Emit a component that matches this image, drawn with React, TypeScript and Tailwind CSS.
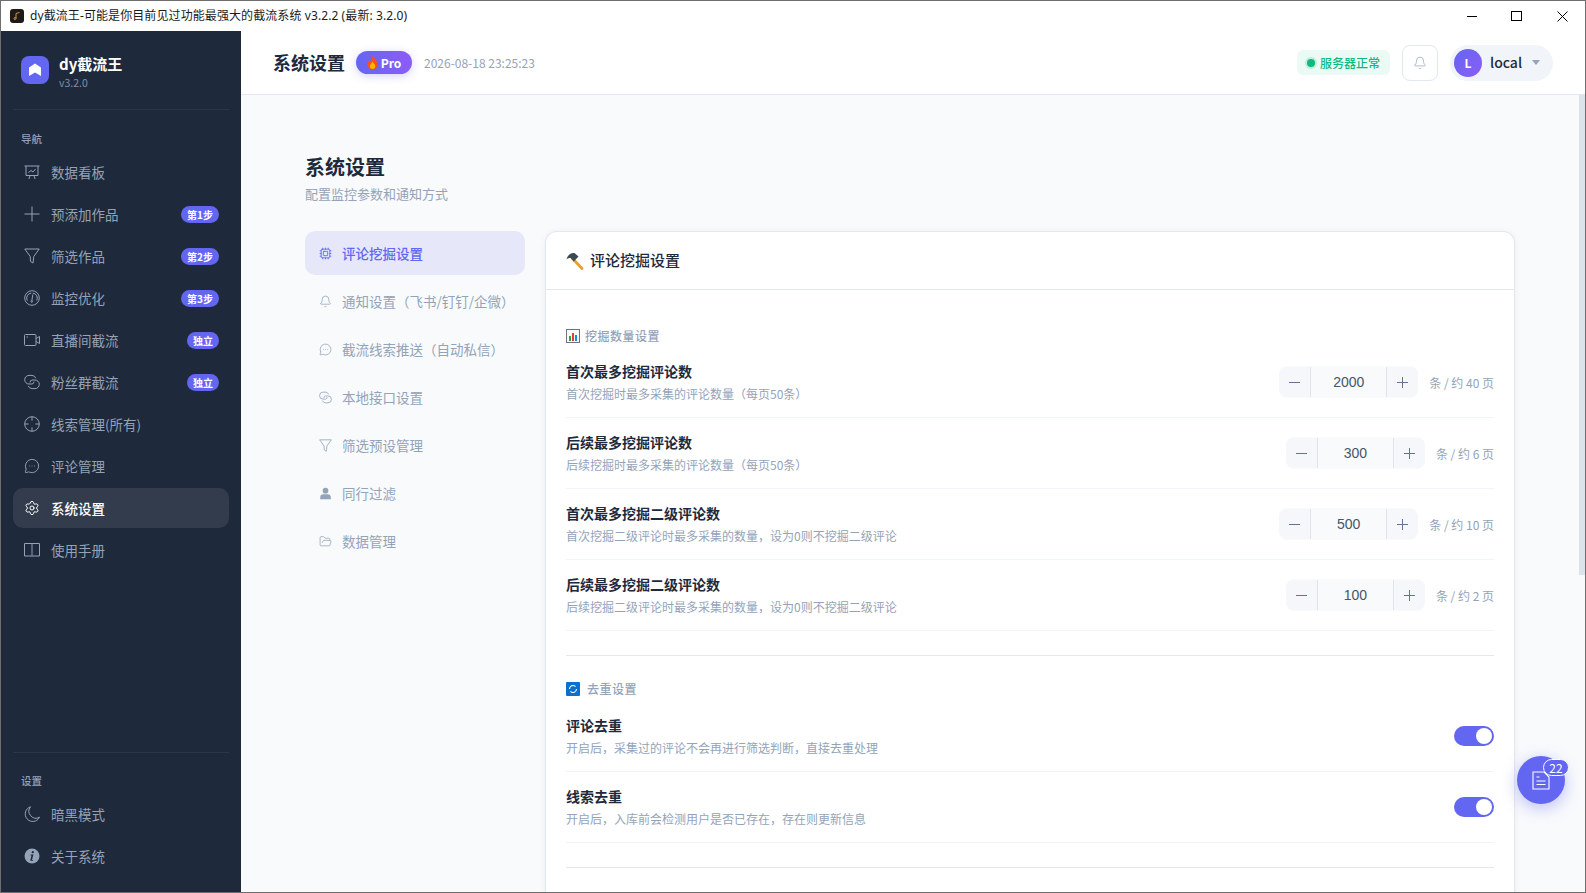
import {
  Bell,
  Cpu,
  FolderOpen,
  MessageCircleMore,
  Settings,
} from "lucide-react";

type IconProps = { size?: number; className?: string };

function Outline({ size = 16, className = "", children }: IconProps & { children: React.ReactNode }) {
  return (
    <svg width={size} height={size} viewBox="0 0 16 16" fill="none" stroke="currentColor" strokeWidth="1" className={className}>
      {children}
    </svg>
  );
}

const BoardIcon = (p: IconProps) => (
  <Outline {...p}>
    <path d="M.5 2h15M2 2v9.500h12V2M5 15l1-3.500M11 15l-1-3.500M4.500 8.500 7 6.500l2 1.500 2.500-3" />
  </Outline>
);
const PlusIcon = (p: IconProps) => (
  <Outline {...p}>
    <path d="M8 .5v15M.5 8h15" />
  </Outline>
);
const FilterIcon = (p: IconProps) => (
  <Outline {...p}>
    <path d="M.8 1h14.400L9.800 8.500 9 15l-2.500-1.500-.3-5Z" />
  </Outline>
);
const GaugeIcon = (p: IconProps) => (
  <Outline {...p}>
    <circle cx="8" cy="8" r="7.300" />
    <path d="M3.300 10.500a5 5 0 0 1 4-7.400M12.700 10.500a5 5 0 0 0-4-7.400M8.800 4.500 7.800 11" />
    <circle cx="7.700" cy="11.500" r=".8" />
  </Outline>
);
const VideoIcon = (p: IconProps) => (
  <Outline {...p}>
    <rect x=".5" y="2.500" width="11.500" height="11" rx="1" />
    <path d="M12 6.500l3.500-2v7l-3.500-2M2.500 5h1.500" />
  </Outline>
);
const LoopsIcon = (p: IconProps) => (
  <Outline {...p}>
    <path d="M6 10H5a4.300 4.300 0 0 1 0-8.600h3a4.300 4.300 0 0 1 3.800 2.800" />
    <path d="M10 6h1a4.300 4.300 0 0 1 0 8.600H8a4.300 4.300 0 0 1-3.800-2.800" />
    <path d="M6 10h2a2.500 2.500 0 0 0 2-2.500M10 6H8A2.500 2.500 0 0 0 6 8.500" />
  </Outline>
);
const AimIcon = (p: IconProps) => (
  <Outline {...p}>
    <circle cx="8" cy="8" r="7.300" />
    <path d="M8 .7v4M8 11.300v4M.7 8h4M11.300 8h4" />
  </Outline>
);
const BookIcon = (p: IconProps) => (
  <Outline {...p}>
    <path d="M1 1.500h14.500v12.500H8.500L8 14.500 7.500 14H.5V1.500ZM8 2v12" />
  </Outline>
);
const MoonIcon = (p: IconProps) => (
  <Outline {...p}>
    <path d="M6.500.8A7.500 7.500 0 1 0 15.500 11.200 7 7 0 0 1 6.500.8Z" />
  </Outline>
);
const UserFilledIcon = ({ size = 16, className = "" }: IconProps) => (
  <svg width={size} height={size} viewBox="0 0 16 16" fill="currentColor" className={className}>
    <circle cx="8" cy="4.500" r="3.500" />
    <path d="M1.500 15v-2a4 4 0 0 1 4-4h5a4 4 0 0 1 4 4v2Z" />
  </svg>
);

const SettingsIcon = ({ size = 16, className = "" }: IconProps) => <Settings size={size} strokeWidth={1.5} className={className} />;
const ChatIcon = ({ size = 16, className = "" }: IconProps) => <MessageCircleMore size={size} strokeWidth={1.4} className={className} />;
const BellIcon = ({ size = 16, className = "" }: IconProps) => <Bell size={size} strokeWidth={1.4} className={className} />;
const CpuIcon = ({ size = 16, className = "" }: IconProps) => <Cpu size={size} strokeWidth={1.6} className={className} />;
const FolderIcon = ({ size = 16, className = "" }: IconProps) => <FolderOpen size={size} strokeWidth={1.4} className={className} />;

type NavItem = { label: string; icon: (p: IconProps) => React.ReactNode; badge?: string; active?: boolean };

const navItems: NavItem[] = [
  { label: "数据看板", icon: BoardIcon },
  { label: "预添加作品", icon: PlusIcon, badge: "第1步" },
  { label: "筛选作品", icon: FilterIcon, badge: "第2步" },
  { label: "监控优化", icon: GaugeIcon, badge: "第3步" },
  { label: "直播间截流", icon: VideoIcon, badge: "独立" },
  { label: "粉丝群截流", icon: LoopsIcon, badge: "独立" },
  { label: "线索管理(所有)", icon: AimIcon },
  { label: "评论管理", icon: ChatIcon },
  { label: "系统设置", icon: SettingsIcon, active: true },
  { label: "使用手册", icon: BookIcon },
];

const settingMenu: { label: string; icon: (p: IconProps) => React.ReactNode; active?: boolean }[] = [
  { label: "评论挖掘设置", icon: CpuIcon, active: true },
  { label: "通知设置（飞书/钉钉/企微）", icon: BellIcon },
  { label: "截流线索推送（自动私信）", icon: ChatIcon },
  { label: "本地接口设置", icon: LoopsIcon },
  { label: "筛选预设管理", icon: FilterIcon },
  { label: "同行过滤", icon: UserFilledIcon },
  { label: "数据管理", icon: FolderIcon },
];

const numberRows = [
  { title: "首次最多挖掘评论数", desc: "首次挖掘时最多采集的评论数量（每页50条）", value: "2000", unit: "条 / 约 40 页" },
  { title: "后续最多挖掘评论数", desc: "后续挖掘时最多采集的评论数量（每页50条）", value: "300", unit: "条 / 约 6 页" },
  { title: "首次最多挖掘二级评论数", desc: "首次挖掘二级评论时最多采集的数量，设为0则不挖掘二级评论", value: "500", unit: "条 / 约 10 页" },
  { title: "后续最多挖掘二级评论数", desc: "后续挖掘二级评论时最多采集的数量，设为0则不挖掘二级评论", value: "100", unit: "条 / 约 2 页" },
];

const toggleRows = [
  { title: "评论去重", desc: "开启后，采集过的评论不会再进行筛选判断，直接去重处理" },
  { title: "线索去重", desc: "开启后，入库前会检测用户是否已存在，存在则更新信息" },
];

function SideLink({ item }: { item: NavItem }) {
  const Icon = item.icon;
  return (
    <div
      className={`flex h-[40px] items-center rounded-[10px] pl-[11px] pr-[10px] ${
        item.active ? "bg-[#333c4d] font-medium text-white" : "text-[#94a3b8]"
      }`}
    >
      <Icon size={16} className="shrink-0" />
      <span className="ml-[11px] flex-1 text-[13.5px]">{item.label}</span>
      {item.badge && (
        <span className="flex h-[17px] items-center rounded-full bg-[#6366f1] px-[6px] text-[10px] font-bold text-white">
          {item.badge}
        </span>
      )}
    </div>
  );
}

function Sidebar() {
  return (
    <aside className="flex w-[240px] shrink-0 flex-col bg-[#1e293b] px-[12px]">
      <div className="flex h-[79px] items-center border-b border-[#2b3648] pl-[8px]">
        <div className="flex h-[28px] w-[28px] items-center justify-center rounded-[8px] bg-[#6366f1]">
          <svg width="16" height="16" viewBox="0 0 16 16" fill="#ffffff">
            <path d="M8 1.5 14 5.5V14L8 10.5 2 14V5.5Z" />
          </svg>
        </div>
        <div className="ml-[10px] pt-[5px]">
          <div className="text-[15px] font-bold leading-[20px] text-white">dy截流王</div>
          <div className="mt-[1px] text-[10.5px] leading-[16px] text-[#8290a5]">v3.2.0</div>
        </div>
      </div>
      <div className="mt-[20px] h-[18px] pl-[8px] text-[10.5px] font-medium leading-[18px] text-[#94a3b8]">导航</div>
      <nav className="mt-[4px] flex flex-col gap-[2px]">
        {navItems.map((item) => (
          <SideLink key={item.label} item={item} />
        ))}
      </nav>
      <div className="mt-auto border-t border-[#2b3648] pb-[16px] pt-[19px]">
        <div className="h-[18px] pl-[8px] text-[10.5px] font-medium leading-[18px] text-[#94a3b8]">设置</div>
        <div className="mt-[4px] flex flex-col gap-[2px]">
          <SideLink item={{ label: "暗黑模式", icon: MoonIcon }} />
          <div className="flex h-[40px] items-center pl-[11px] text-[#94a3b8]">
            <svg width="16" height="16" viewBox="0 0 16 16">
              <circle cx="8" cy="8" r="7.500" fill="#94a3b8" />
              <circle cx="8.800" cy="4.200" r="1.100" fill="#1e293b" />
              <path d="M6.600 6.600h2.800L8 12h1v.8H6.200L7.500 7.400h-.9Z" fill="#1e293b" />
            </svg>
            <span className="ml-[11px] text-[13.5px]">关于系统</span>
          </div>
        </div>
      </div>
    </aside>
  );
}

function Header() {
  return (
    <header className="flex h-[64px] shrink-0 items-center border-b border-[#e2e8f0] bg-white pl-[32px] pr-[32px]">
      <h1 className="text-[18px] font-bold text-[#1e293b]">系统设置</h1>
      <span className="ml-[11px] flex h-[23px] w-[56px] items-center justify-center gap-[3px] rounded-full bg-gradient-to-r from-[#6366f1] to-[#8b5cf6] text-[12px] font-bold text-white shadow-[0_2px_8px_rgba(99,102,241,0.3)]">
        <svg width="11" height="15" viewBox="0 0 12 16">
          <path d="M6 0c.6 2.600 5.600 5 5.600 10A5.600 5.600 0 0 1 .4 10C.4 7.600 2 6.400 2.600 4.600c.7.600 1 1.300 1.200 2C5 5 6.200 3 6 0Z" fill="#f4511e" />
          <path d="M6 7c.3 1.400 3 2.600 3 5a3 3 0 0 1-6 0c0-2 2.400-2.800 3-5Z" fill="#ffb300" />
        </svg>
        Pro
      </span>
      <span className="ml-[12px] text-[12px] text-[#94a3b8]">2026-08-18 23:25:23</span>
      <div className="ml-auto flex items-center">
        <div className="flex h-[25px] w-[93px] items-center justify-center gap-[5px] rounded-[6px] bg-[#ecfaf5] text-[12px] font-medium text-[#10b981]">
          <span className="h-[8px] w-[8px] rounded-full bg-[#10b981] shadow-[0_0_0_2px_rgba(16,185,129,0.2)]" />
          服务器正常
        </div>
        <button className="ml-[12px] flex h-[36px] w-[36px] items-center justify-center rounded-[8px] border border-[#e2e8f0] bg-white text-[#94a3b8]">
          <Bell size={14} strokeWidth={1.25} />
        </button>
        <div className="ml-[12px] flex h-[36px] w-[103px] items-center rounded-full bg-[#f1f5f9] pl-[4px]">
          <div className="flex h-[28px] w-[28px] items-center justify-center rounded-full bg-gradient-to-br from-[#6366f1] to-[#8b5cf6] text-[12px] font-semibold text-white">
            L
          </div>
          <span className="ml-[8px] text-[14px] font-medium text-[#1e293b]">local</span>
          <svg width="8" height="5" viewBox="0 0 8 5" className="ml-[10px]">
            <path d="M0 0h8L4 5Z" fill="#94a3b8" />
          </svg>
        </div>
      </div>
    </header>
  );
}

function Stepper({ value }: { value: string }) {
  return (
    <div className="flex h-[32px] w-[139px] items-center rounded-[8px] bg-[#f8fafc] font-['Liberation_Sans',sans-serif] text-[#475569]">
      <span className="flex h-[30px] w-[32px] items-center justify-center rounded-l-[8px] border-r border-[#dfe3ea] bg-[#f5f7fa] text-[#64748b]">
        <PlusMinus />
      </span>
      <span className="flex-1 text-center text-[14px]">{value}</span>
      <span className="flex h-[30px] w-[32px] items-center justify-center rounded-r-[8px] border-l border-[#dfe3ea] bg-[#f5f7fa] text-[#64748b]">
        <PlusMinus plus />
      </span>
    </div>
  );
}

function PlusMinus({ plus = false }: { plus?: boolean }) {
  return (
    <svg width="11" height="11" viewBox="0 0 11 11" stroke="currentColor" strokeWidth="1">
      <path d="M0 5.500h11" />
      {plus && <path d="M5.500 0v11" />}
    </svg>
  );
}

function SettingRow({ title, desc, children }: { title: string; desc: string; children: React.ReactNode }) {
  return (
    <div className="flex h-[71px] items-center justify-between border-b border-[#f1f5f9]">
      <div>
        <div className="text-[14px] font-semibold leading-[20px] text-[#1e293b]">{title}</div>
        <div className="mt-[4px] text-[12px] leading-[18px] text-[#94a3b8]">{desc}</div>
      </div>
      {children}
    </div>
  );
}

function Toggle() {
  return (
    <div className="flex h-[20px] w-[40px] items-center justify-end rounded-full bg-[#6366f1] pr-[2px]">
      <span className="h-[16px] w-[16px] rounded-full bg-white" />
    </div>
  );
}

function SectionTitle({ icon, text }: { icon: React.ReactNode; text: string }) {
  return (
    <div className="flex h-[20px] items-center gap-[5px] text-[12px] font-medium tracking-[0.5px] text-[#94a3b8]">
      {icon}
      {text}
    </div>
  );
}

function SettingsCard() {
  return (
    <section className="h-[800px] flex-1 rounded-t-[12px] border border-b-0 border-[#e2e8f0] bg-white shadow-[0_1px_6px_rgba(15,23,42,0.06)]">
      <div className="flex h-[58px] items-center gap-[6px] border-b border-[#e2e8f0] pl-[20px] text-[15px] font-medium text-[#1e293b]">
        <svg width="18" height="18" viewBox="0 0 18 18">
          <path d="M6.500 6.500 16 16.500" stroke="#e8a02a" strokeWidth="2.800" strokeLinecap="round" />
          <path d="M.5 7.500C1.500 2.800 5.500 .2 8.800 1.200L12.500 4.500 7.800 9.500 4.800 6.200C3.300 5.700 1.800 6.200.5 7.500Z" fill="#3d4a54" />
        </svg>
        评论挖掘设置
      </div>
      <div className="px-[20px] pt-[36px]">
        <SectionTitle
          text="挖掘数量设置"
          icon={
            <svg width="14" height="14" viewBox="0 0 14 14">
              <rect x="0.500" y="0.500" width="13" height="13" fill="#fafafa" stroke="#6b7280" />
              <rect x="3" y="7" width="2" height="5" fill="#2e9e4f" />
              <rect x="6" y="4" width="2" height="8" fill="#e53935" />
              <rect x="9" y="6" width="2" height="6" fill="#1e88e5" />
            </svg>
          }
        />
        <div className="mt-[1px]">
          {numberRows.map((row) => (
            <SettingRow key={row.title} title={row.title} desc={row.desc}>
              <div className="flex items-center">
                <Stepper value={row.value} />
                <span className="ml-[11px] mt-[1px] text-[12px] text-[#94a3b8]">{row.unit}</span>
              </div>
            </SettingRow>
          ))}
        </div>
        <div className="mt-[24px] border-t border-[#e2e8f0] pt-[23px]">
          <SectionTitle
            text="去重设置"
            icon={
              <svg width="14" height="14" viewBox="0 0 14 14" className="mr-[2px]">
                <rect width="14" height="14" rx="1" fill="#0b6fd0" />
                <path d="M3.500 7a3.500 3.500 0 0 1 6-2.400M10.500 7a3.500 3.500 0 0 1-6 2.400" fill="none" stroke="#fff" strokeWidth="1.100" />
              </svg>
            }
          />
          <div className="mt-[2px]">
            {toggleRows.map((row) => (
              <SettingRow key={row.title} title={row.title} desc={row.desc}>
                <Toggle />
              </SettingRow>
            ))}
          </div>
        </div>
        <div className="mt-[24px] border-t border-[#e2e8f0]" />
      </div>
    </section>
  );
}

export default function App() {
  return (
    <div className="relative flex h-[893px] w-[1586px] flex-col overflow-hidden border border-[#6e6e6e] bg-white font-['Noto_Sans_CJK_SC',sans-serif]">
      {/* 标题栏 */}
      <div className="flex h-[30px] shrink-0 items-center bg-white pl-[9px] pr-[17px] text-[12px] text-[#1a1a1a]">
        <span className="flex h-[14px] w-[14px] items-center justify-center rounded-[3px] bg-[#1f1a17]">
          <svg width="10" height="10" viewBox="0 0 10 10" fill="none" stroke="#c9973f" strokeWidth="1">
            <path d="M4 7.500V2.500L7.500 1.500" />
            <circle cx="3" cy="7.500" r="1" />
          </svg>
        </span>
        <span className="ml-[6px] font-['Noto_Sans','Noto_Sans_CJK_SC',sans-serif] tracking-[0.09px]">dy截流王-可能是你目前见过功能最强大的截流系统 v3.2.2 (最新: 3.2.0)</span>
        <div className="ml-auto flex items-center">
          <span className="h-px w-[10px] bg-black" />
          <span className="ml-[34px] h-[10px] w-[11px] border border-black" />
          <svg width="11" height="11" viewBox="0 0 11 11" stroke="#000" strokeWidth="1" className="ml-[35px]">
            <path d="M0.500 0.500 10.500 10.500M10.500 0.500 0.500 10.500" />
          </svg>
        </div>
      </div>
      <div className="flex min-h-0 flex-1">
        <Sidebar />
        <div className="flex min-w-0 flex-1 flex-col">
          <Header />
          <div className="flex min-h-0 flex-1 bg-[#f8fafc]">
            <main className="min-w-0 flex-1 overflow-hidden px-[64px] pt-[58px]">
              <h2 className="text-[20px] font-bold leading-[28px] text-[#1e293b]">系统设置</h2>
              <p className="mt-[3px] text-[13px] leading-[20px] text-[#94a3b8]">配置监控参数和通知方式</p>
              <div className="mt-[27px] flex gap-[20px]">
                <div className="flex w-[220px] shrink-0 flex-col gap-[4px]">
                  {settingMenu.map((m) => {
                    const Icon = m.icon;
                    return (
                      <div
                        key={m.label}
                        className={`flex h-[44px] items-center rounded-[10px] pl-[14px] text-[13.5px] ${
                          m.active ? "bg-[#e6e7f9] font-medium text-[#6366f1]" : "text-[#94a3b8]"
                        }`}
                      >
                        <Icon size={13} className="shrink-0" />
                        <span className="ml-[10px]">{m.label}</span>
                      </div>
                    );
                  })}
                </div>
                <SettingsCard />
              </div>
            </main>
            <div className="w-[6px] shrink-0 bg-[#f8fafc]">
              <div className="h-[480px] bg-[#dde3ea]" />
            </div>
          </div>
        </div>
      </div>
      {/* 悬浮按钮 */}
      <div className="absolute left-[1516px] top-[755px] flex h-[48px] w-[48px] items-center justify-center rounded-full bg-[#6366f1] text-white shadow-[0_4px_16px_rgba(99,102,241,0.4)]">
        <svg width="18" height="20" viewBox="0 0 18 20" fill="none" stroke="#fff" strokeWidth="1.100">
          <path d="M1 2h11l5 5v12H1Z" />
          <path d="M4.500 7h3M4.500 11h9M4.500 14.500h9" />
        </svg>
        <span className="absolute left-[26px] top-[3px] flex h-[17px] w-[26px] items-center justify-center rounded-full border border-white bg-[#6366f1] text-[12px] leading-none">22</span>
      </div>
    </div>
  );
}
